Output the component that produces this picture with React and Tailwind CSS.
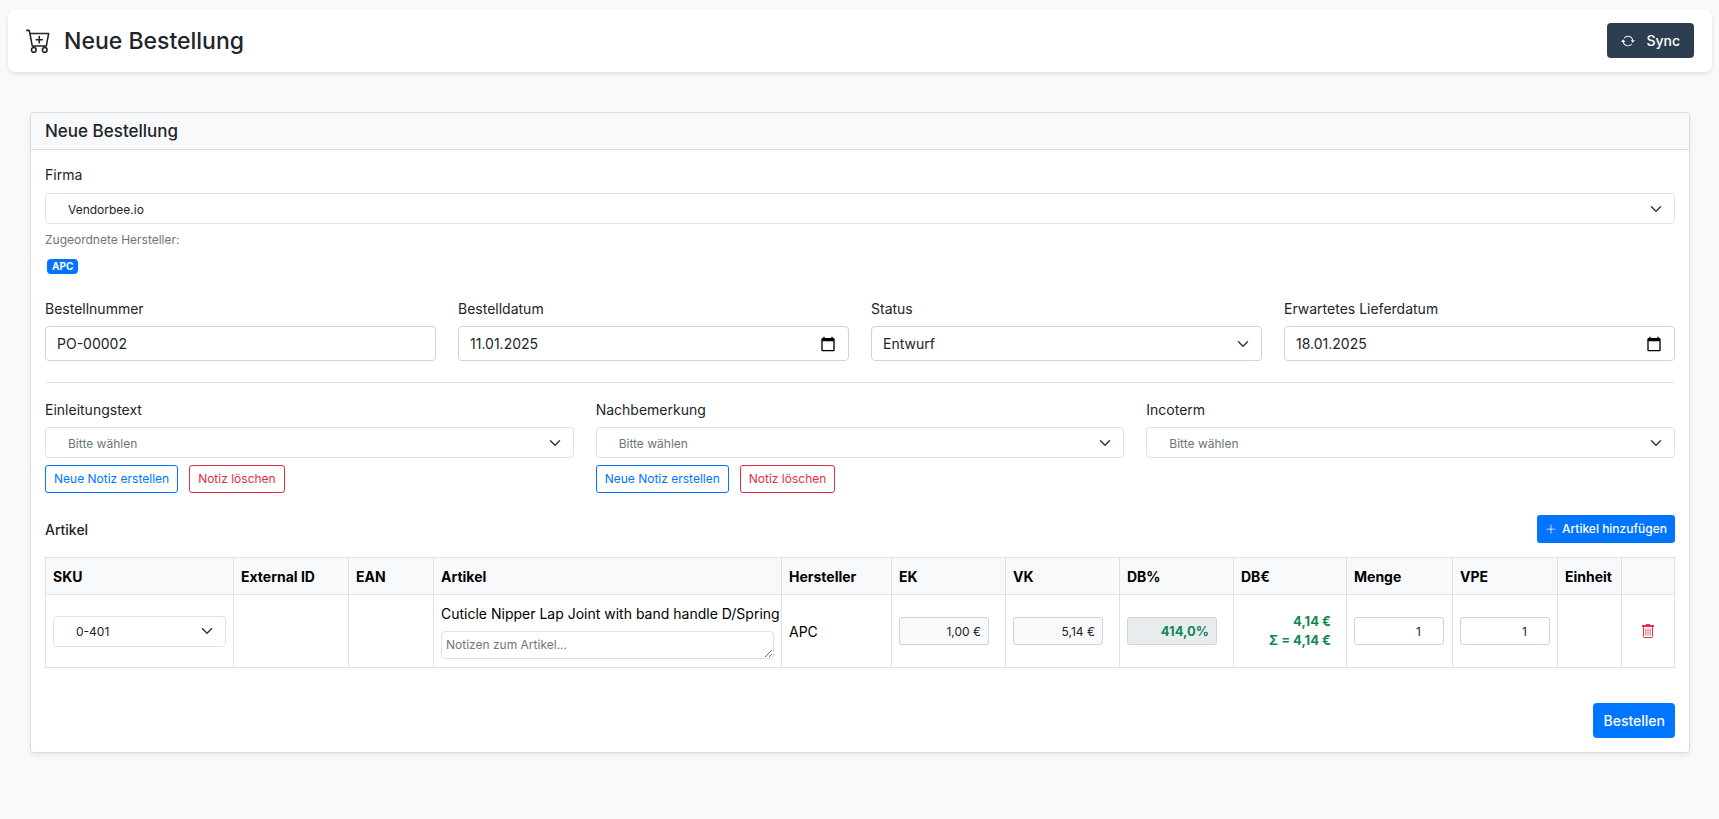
import { BsArrowRepeat, BsCartPlus, BsPlusLg } from "react-icons/bs";

const fieldBox =
  "block w-full h-[35px] rounded border border-[#ced4da] bg-white px-[11px] text-[14px] leading-[21px] text-[#212529]";
const cellInput =
  "block w-[90px] h-7 rounded-[3px] border border-[#ced4da] pl-2 pr-[7px] text-right leading-[18px]";

function Chevron() {
  return (
    <svg
      viewBox="0 0 16 16"
      className="pointer-events-none absolute right-[13px] top-1/2 size-3 -translate-y-1/2"
      fill="none"
      stroke="#343a40"
      strokeWidth="2"
      strokeLinecap="round"
      strokeLinejoin="round"
      aria-hidden="true"
    >
      <path d="m2 5 6 6 6-6" />
    </svg>
  );
}

function TrashIcon() {
  return (
    <svg viewBox="0 0 14 16" className="h-4 w-[14px]" fill="none" stroke="currentColor" aria-hidden="true">
      <path d="M1 3h12" strokeWidth="2" />
      <path d="M5 1.5h4" strokeWidth="1" />
      <path d="M2.5 4v9.5a1 1 0 0 0 1 1h7a1 1 0 0 0 1-1V4" strokeWidth="1" />
      <path d="M4.75 5.5v7M7 5.5v7M9.25 5.5v7" strokeWidth="0.8" />
    </svg>
  );
}

function SearchSelect({ id, value, muted = false, label }) {
  return (
    <div className="relative">
      <select
        id={id}
        aria-label={label}
        className={`block h-[31px] w-full appearance-none rounded border border-[#dee2e6] bg-white pl-[22px] pr-8 pt-[2px] text-[12px] leading-[18px] ${
          muted ? "text-[#6c757d]" : "text-[#212529]"
        }`}
      >
        <option>{value}</option>
      </select>
      <Chevron />
    </div>
  );
}

function Field({ id, label, children }) {
  return (
    <div>
      <label htmlFor={id} className="mb-[7px] block">
        {label}
      </label>
      {children}
    </div>
  );
}

function DateInput({ id, value }) {
  return (
    <div className="relative">
      <input id={id} type="text" inputMode="numeric" defaultValue={value} className={fieldBox} />
      <button
        type="button"
        aria-label="Kalender öffnen"
        className="absolute right-[13px] top-1/2 -translate-y-1/2"
      >
        <svg viewBox="0 0 24 24" className="size-4" fill="#000" aria-hidden="true">
          <path d="M20 3h-1V1h-2v2H7V1H5v2H4c-1.1 0-2 .9-2 2v16c0 1.1.9 2 2 2h16c1.1 0 2-.9 2-2V5c0-1.1-.9-2-2-2zm0 18H4V8h16v13z" />
        </svg>
      </button>
    </div>
  );
}

function NoteButtons() {
  const base = "h-7 rounded-[3px] border px-2 text-[12px] leading-[18px]";
  return (
    <div className="mt-[7px] flex gap-[11px]">
      <button type="button" className={`${base} border-[#0075ff] text-[#0075ff]`}>
        Neue Notiz erstellen
      </button>
      <button type="button" className={`${base} border-[#dc3049] text-[#dc3049]`}>
        Notiz löschen
      </button>
    </div>
  );
}

const columns = [
  ["SKU", "w-[188px]"],
  ["External ID", "w-[115px]"],
  ["EAN", "w-[85px]"],
  ["Artikel", ""],
  ["Hersteller", "w-[110px]"],
  ["EK", "w-[114px]"],
  ["VK", "w-[114px]"],
  ["DB%", "w-[114px]"],
  ["DB€", "w-[113px]"],
  ["Menge", "w-[106px]"],
  ["VPE", "w-[105px]"],
  ["Einheit", "w-[64px]"],
  ["", "w-[53px]"],
];

const cell = "border border-[#dee2e6] px-[7px] py-2 align-middle";

export default function App() {
  return (
    <div className="min-h-screen bg-[#f8f9fb] pb-16 pl-2 pr-[7px] pt-[9px] font-['Inter','Liberation_Sans',sans-serif] text-[14px] leading-[21px] text-[#212529]">
      <header className="flex items-center justify-between rounded-lg bg-white px-[18px] py-[14px] shadow-[0_2px_4px_rgba(0,0,0,0.1)]">
        <div className="flex items-center gap-[13px]">
          <BsCartPlus className="size-[25px]" aria-hidden="true" />
          <h1 className="text-[23px] font-medium leading-[30px]">Neue Bestellung</h1>
        </div>
        <button
          type="button"
          className="flex h-[35px] items-center gap-[11px] rounded bg-[#2c3e50] px-[14px] font-medium text-white"
        >
          <BsArrowRepeat className="size-[14px]" aria-hidden="true" />
          Sync
        </button>
      </header>

      <main className="mx-[22px] mt-10 rounded border border-[#dcdee1] bg-white shadow-[0_2px_4px_rgba(0,0,0,0.075)]">
        <div className="rounded-t border-b border-[#dcdee1] bg-[#f8f9fb] px-[14px] py-[7px]">
          <h2 className="text-[17px] font-medium leading-[22px]">Neue Bestellung</h2>
        </div>

        <form className="p-[14px]" onSubmit={(e) => e.preventDefault()}>
          <div>
            <label htmlFor="firma" className="mb-2 block">
              Firma
            </label>
            <SearchSelect id="firma" value="Vendorbee.io" />
          </div>
          <p className="mt-[7px] text-[12px] leading-[18px] text-[#6c757d]">Zugeordnete Hersteller:</p>
          <div className="mt-[10px] flex px-[2px]">
            <span className="rounded bg-[#0075ff] px-[5px] text-[10px] font-bold leading-[15px] text-white">
              APC
            </span>
          </div>

          <div className="mt-6 grid grid-cols-4 gap-[22px]">
            <Field id="bestellnummer" label="Bestellnummer">
              <input id="bestellnummer" type="text" defaultValue="PO-00002" className={fieldBox} />
            </Field>
            <Field id="bestelldatum" label="Bestelldatum">
              <DateInput id="bestelldatum" value="11.01.2025" />
            </Field>
            <Field id="status" label="Status">
              <div className="relative">
                <select id="status" className={`${fieldBox} appearance-none`}>
                  <option>Entwurf</option>
                </select>
                <Chevron />
              </div>
            </Field>
            <Field id="lieferdatum" label="Erwartetes Lieferdatum">
              <DateInput id="lieferdatum" value="18.01.2025" />
            </Field>
          </div>

          <hr className="mb-4 mt-[21px] border-[#dee2e6]" />

          <div className="grid grid-cols-3 gap-[22px]">
            <div>
              <Field id="einleitung" label="Einleitungstext">
                <SearchSelect id="einleitung" value="Bitte wählen" muted />
              </Field>
              <NoteButtons />
            </div>
            <div>
              <Field id="nachbemerkung" label="Nachbemerkung">
                <SearchSelect id="nachbemerkung" value="Bitte wählen" muted />
              </Field>
              <NoteButtons />
            </div>
            <Field id="incoterm" label="Incoterm">
              <SearchSelect id="incoterm" value="Bitte wählen" muted />
            </Field>
          </div>

          <div className="mb-[14px] mt-[22px] flex items-center justify-between">
            <h3 className="font-medium">Artikel</h3>
            <button
              type="button"
              className="flex h-7 items-center gap-[5px] rounded-[3px] bg-[#0075ff] px-2 text-[12px] font-medium leading-[18px] text-white"
            >
              <BsPlusLg className="size-3" aria-hidden="true" />
              Artikel hinzufügen
            </button>
          </div>

          <table className="w-full table-fixed border-collapse text-black">
            <thead>
              <tr className="bg-[#f8f9fb]">
                {columns.map(([name, width], i) => (
                  <th
                    key={i}
                    className={`border border-[#dee2e6] px-[7px] pb-[6px] pt-2 text-left font-bold leading-[22px] ${width}`}
                  >
                    {name}
                  </th>
                ))}
              </tr>
            </thead>
            <tbody>
              <tr>
                <td className={cell}>
                  <SearchSelect label="SKU" value="0-401" />
                </td>
                <td className={cell}></td>
                <td className={cell}></td>
                <td className={cell}>
                  <div className="whitespace-nowrap">Cuticle Nipper Lap Joint with band handle D/Spring</div>
                  <textarea
                    rows={1}
                    aria-label="Notizen zum Artikel"
                    placeholder="Notizen zum Artikel..."
                    className="mt-[7px] block h-7 w-full rounded border border-[#dee2e6] px-1 py-1 text-[12px] leading-[18px] placeholder:text-[#757575]"
                  />
                </td>
                <td className={cell}>APC</td>
                <td className={cell}>
                  <input aria-label="EK" type="text" defaultValue="1,00 €" className={`${cellInput} bg-[#f8f9fb] text-[12px] text-[#212529]`} />
                </td>
                <td className={cell}>
                  <input aria-label="VK" type="text" defaultValue="5,14 €" className={`${cellInput} bg-[#f8f9fb] text-[12px] text-[#212529]`} />
                </td>
                <td className={cell}>
                  <input
                    aria-label="DB%"
                    type="text"
                    readOnly
                    defaultValue="414,0%"
                    className={`${cellInput} bg-[#e9ecef] text-[13px] font-bold text-[#128754]`}
                  />
                </td>
                <td className={cell}>
                  <div className="w-[90px] text-right text-[13px] font-bold leading-[19px] text-[#128754]">
                    <div>4,14 €</div>
                    <div>Σ = 4,14 €</div>
                  </div>
                </td>
                <td className={cell}>
                  <input aria-label="Menge" type="number" defaultValue="1" className={`${cellInput} bg-white text-[12px] text-[#212529]`} />
                </td>
                <td className={cell}>
                  <input aria-label="VPE" type="number" defaultValue="1" className={`${cellInput} bg-white text-[12px] text-[#212529]`} />
                </td>
                <td className={cell}></td>
                <td className={cell}>
                  <button type="button" aria-label="Artikel entfernen" className="mx-auto block text-[#e0304b]">
                    <TrashIcon />
                  </button>
                </td>
              </tr>
            </tbody>
          </table>

          <div className="mt-[35px] flex justify-end">
            <button type="submit" className="h-[35px] rounded bg-[#0075ff] px-[10px] font-medium text-white">
              Bestellen
            </button>
          </div>
        </form>
      </main>
    </div>
  );
}
